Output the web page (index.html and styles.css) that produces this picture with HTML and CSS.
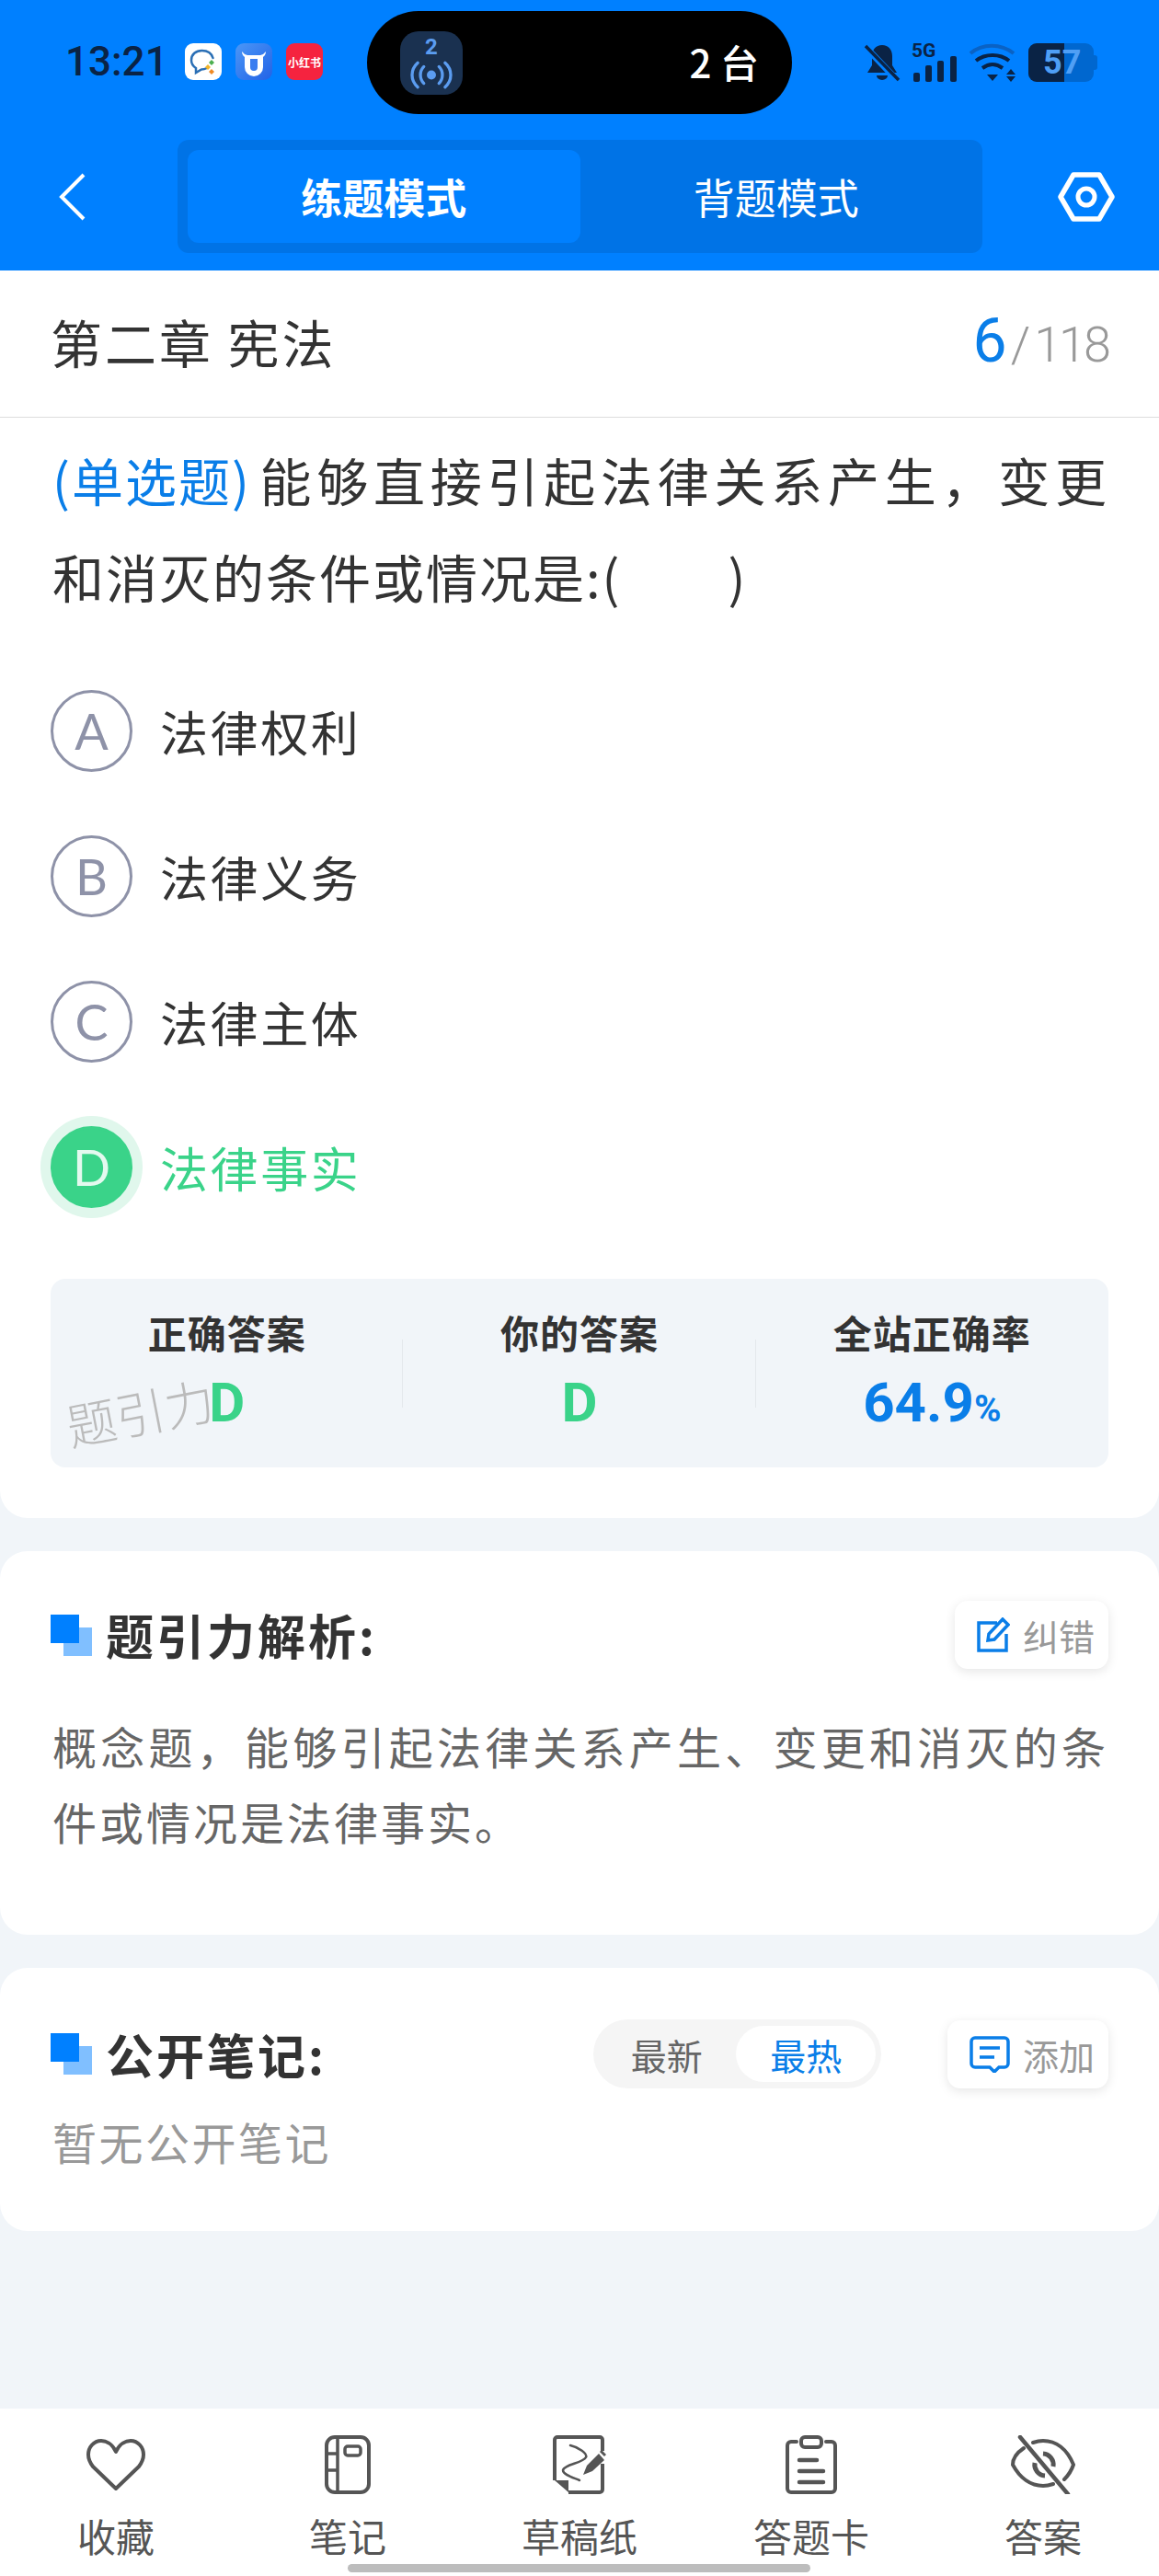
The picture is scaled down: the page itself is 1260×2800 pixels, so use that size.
FILE: index.html
```html
<!DOCTYPE html>
<html lang="zh-CN">
<head>
    <meta charset="UTF-8">
    <title>练题模式</title>
    <link rel="stylesheet" href="styles.css">
</head>
<body>
    <header class="top">
        <div class="status">
            <div class="status-left">
                <span class="time">13:21</span>
                <span class="app-icon app-white">
                    <svg viewBox="0 0 40 40" width="40" height="40"><path d="M24 27c-2 1-4 1.500-6 1.500l-6 3.500v-5c-3-2-5-5-5-8.500C7 12 12 8 18.500 8 25 8 29 11 30.500 16" fill="none" stroke="#2a6fb5" stroke-width="2.500" stroke-linecap="round"/><path d="M29 18l3 3-3 3-3-3z" fill="#4caf50"/><path d="M25 23l3 3-3 3-3-3z" fill="#f0b429"/><path d="M29 28l3 3-3 3-3-3z" fill="#f08a24"/></svg>
                </span>
                <span class="app-icon app-blue">
                    <svg viewBox="0 0 40 40" width="40" height="40"><path d="M7 9c0 4 3 7 6 7h14c3 0 6-3 6-7l-3 3-3 1H13l-3-1z" fill="#fff"/><path d="M10 14h20v12a10 10 0 0 1-20 0z" fill="#fff"/><path d="M16 17h8v9a4 4 0 0 1-8 0z" fill="#3a7df0"/></svg>
                </span>
                <span class="app-icon app-red">小红书</span>
            </div>
            <div class="island">
                <span class="island-icon">
                    <b>2</b>
                    <svg viewBox="0 0 68 40" width="56" height="33"><circle cx="34" cy="20" r="6" fill="#5b9cf0"/><path d="M24 9c-6 6-6 16 0 22M44 9c6 6 6 16 0 22M16 4c-10 9-10 23 0 32M52 4c10 9 10 23 0 32" fill="none" stroke="#5b9cf0" stroke-width="4" stroke-linecap="round"/></svg>
                </span>
                <span class="island-text">2 台</span>
            </div>
            <div class="status-right">
                <svg class="st-bell" viewBox="0 0 40 42" width="40" height="42"><path d="M20 2c-7 0-11 5-11 12v10l-5 8h32l-5-8v-10c0-7-4-12-11-12z" fill="#0a2345"/><path d="M14 35h12a6 5 0 0 1-12 0z" fill="#0a2345"/><path d="M1 3l36 38" stroke="#0080ff" stroke-width="7"/><path d="M2 3l36 37" stroke="#0a2345" stroke-width="3.500"/></svg>
                <span class="st-signal">
                    <em>5G</em>
                    <svg viewBox="0 0 50 28" width="50" height="28"><rect x="2" y="18" width="7" height="10" rx="2"/><rect x="15" y="10" width="7" height="18" rx="2"/><rect x="28" y="5" width="7" height="23" rx="2"/><rect x="42" y="0" width="7" height="28" rx="2"/></svg>
                </span>
                <svg class="st-wifi" viewBox="0 0 52 42" width="52" height="42"><path d="M2 11c13-11 33-11 47 0" fill="none" stroke="#0a62c4" stroke-width="4"/><path d="M8 19c10-8 26-8 36 0" fill="none" stroke="#0a2345" stroke-width="4"/><path d="M15 27c7-5 15-5 22 0" fill="none" stroke="#0a2345" stroke-width="4"/><path d="M20 34h12l-6 7z" fill="#0a2345"/><path d="M46 28l5 6h-10zM41 36h10l-5 6z" fill="#0a2345"/></svg>
                <span class="battery"><span class="battery-fill"></span><span class="battery-num">57</span></span>
                <i class="battery-nub"></i>
            </div>
        </div>
        <div class="nav-row">
            <svg class="back" viewBox="0 0 32 54" width="32" height="54"><path d="M29 3L5 27l24 24" fill="none" stroke="#fff" stroke-width="4"/></svg>
            <div class="segment">
                <span class="seg-item seg-active">练题模式</span>
                <span class="seg-item">背题模式</span>
            </div>
            <svg class="gear" viewBox="0 0 62 56" width="62" height="56"><path d="M17 4h28l14 24-14 24H17L3 28z" fill="none" stroke="#fff" stroke-width="5.500" stroke-linejoin="round"/><circle cx="31" cy="28" r="9" fill="none" stroke="#fff" stroke-width="5"/></svg>
        </div>
    </header>

    <main class="page">
        <section class="card card-question">
            <div class="chapter">
                <span class="chapter-name">第二章 宪法</span>
                <span class="count"><span class="count-now">6</span><span class="count-sep">/</span>118</span>
            </div>
            <p class="question"><span class="q-type">(单选题)</span>能够直接引起法律关系产生，变更和消灭的条件或情况是:(&emsp;&emsp;)</p>
            <ul class="options">
                <li class="option"><span class="opt-mark">A</span>法律权利</li>
                <li class="option"><span class="opt-mark">B</span>法律义务</li>
                <li class="option"><span class="opt-mark">C</span>法律主体</li>
                <li class="option option-right"><span class="opt-mark">D</span>法律事实</li>
            </ul>
            <div class="stats">
                <div class="stat"><span class="stat-label">正确答案</span><span class="stat-value green">D</span></div>
                <div class="stat"><span class="stat-label">你的答案</span><span class="stat-value green">D</span></div>
                <div class="stat"><span class="stat-label">全站正确率</span><span class="stat-value blue">64.9<small>%</small></span></div>
                <span class="watermark">题引力</span>
            </div>
        </section>

        <section class="card card-analysis">
            <div class="card-head">
                <h3 class="title"><i class="title-mark"></i>题引力解析:</h3>
                <span class="small-btn">
                    <svg viewBox="0 0 36 38" width="36" height="38"><path d="M22 6H2v30h30V18" fill="none" stroke="#0a7ee8" stroke-width="3.500"/><path d="M12 25l1-7L28 2l6 6-15 16z" fill="none" stroke="#0a7ee8" stroke-width="3.500"/></svg>
                    纠错
                </span>
            </div>
            <p class="analysis-text">概念题，能够引起法律关系产生、变更和消灭的条件或情况是法律事实。</p>
        </section>

        <section class="card card-notes">
            <div class="card-head">
                <h3 class="title"><i class="title-mark"></i>公开笔记:</h3>
                <div class="toggle">
                    <span class="toggle-item">最新</span>
                    <span class="toggle-item toggle-active">最热</span>
                </div>
                <span class="small-btn">
                    <svg viewBox="0 0 44 40" width="44" height="40"><path d="M6 2h32a4 4 0 0 1 4 4v24a4 4 0 0 1-4 4h-6l-5 5-5-5H6a4 4 0 0 1-4-4V6a4 4 0 0 1 4-4z" fill="none" stroke="#0a7ee8" stroke-width="3.500"/><path d="M11 13h22M11 23h16" stroke="#0a7ee8" stroke-width="3.500"/></svg>
                    添加
                </span>
            </div>
            <p class="no-notes">暂无公开笔记</p>
        </section>
    </main>

    <footer class="tabbar">
        <div class="tab">
            <svg viewBox="0 0 64 56" width="64" height="56"><path d="M32 14C28 5 21 2 16 2 8 2 2 9 2 17c0 5 2 9 5 13l25 24 25-24c3-4 5-8 5-13 0-8-6-15-14-15-5 0-12 3-16 12z" fill="none" stroke="#555" stroke-width="4" stroke-linejoin="round"/></svg>
            <span>收藏</span>
        </div>
        <div class="tab">
            <svg viewBox="0 0 50 64" width="50" height="64"><rect x="2" y="2" width="46" height="60" rx="9" fill="none" stroke="#555" stroke-width="4"/><path d="M14 2v60M2 20h12M2 38h12" stroke="#555" stroke-width="3.500"/><rect x="22" y="12" width="17" height="10" rx="3" fill="none" stroke="#555" stroke-width="3.500"/></svg>
            <span>笔记</span>
        </div>
        <div class="tab">
            <svg viewBox="0 0 58 64" width="58" height="64"><path d="M54 31v28a3 3 0 0 1-3 3H17M2 49V5a3 3 0 0 1 3-3h46a3 3 0 0 1 3 3v12" fill="none" stroke="#555" stroke-width="4"/><path d="M2 49h15v13z" fill="#555"/><path d="M19 11C28 13 38 20 36 24 33 30 12 32 11 38 11 43 22 46 29 49" fill="none" stroke="#555" stroke-width="2.500" stroke-linecap="round"/><path d="M33 43l4-10 13-13 6 7-13 12z" fill="#555"/><path d="M52 17l5 5" stroke="#555" stroke-width="3"/></svg>
            <span>草稿纸</span>
        </div>
        <div class="tab">
            <svg viewBox="0 0 56 64" width="56" height="64"><path d="M12 7H6a4 4 0 0 0-4 4v47a4 4 0 0 0 4 4h44a4 4 0 0 0 4-4V11a4 4 0 0 0-4-4h-6" fill="none" stroke="#555" stroke-width="4" stroke-linecap="round"/><rect x="17" y="2" width="22" height="11" rx="4" fill="none" stroke="#555" stroke-width="4"/><path d="M15 27h19M15 39h26M15 51h26" stroke="#555" stroke-width="4.500" stroke-linecap="round"/></svg>
            <span>答题卡</span>
        </div>
        <div class="tab">
            <svg viewBox="0 0 70 64" width="70" height="64"><path d="M14 14C5 20 2 26 2 32c8 15 20 23 33 23 4 0 8-1 11-2M24 8c3-1 7-2 11-2 14 0 26 9 33 26-2 6-6 12-10 16" fill="none" stroke="#555" stroke-width="4" stroke-linecap="round"/><path d="M35 20a12 12 0 0 1 11 14M26 30a12 12 0 0 0 11 14" fill="none" stroke="#555" stroke-width="5"/><path d="M10 2l52 62" stroke="#555" stroke-width="4.500" stroke-linecap="round"/></svg>
            <span>答案</span>
        </div>
        <i class="home-bar"></i>
    </footer>
</body>
</html>
```

FILE: styles.css
```css
* {
    box-sizing: border-box;
}

body {
    margin: 0;
    width: 1260px;
    height: 2800px;
    position: relative;
    overflow: hidden;
    display: flex;
    flex-direction: column;
    background-color: #f1f5f9;
    font-family: "Noto Sans CJK SC", Roboto, sans-serif;
    color: #333;
}

/* top bar */
.top {
    height: 294px;
    background-color: #0080ff;
    padding-top: 12px;
}

.status {
    height: 112px;
    display: flex;
    align-items: center;
    position: relative;
}

.status-left {
    display: flex;
    align-items: center;
    margin-left: 71px;
    margin-top: -2px;
}

.time {
    width: 130px;
    font-family: Roboto, sans-serif;
    font-size: 44px;
    font-weight: 500;
    color: #0a2345;
}

.app-icon {
    width: 40px;
    height: 40px;
    border-radius: 9px;
    margin-right: 15px;
    display: flex;
    align-items: center;
    justify-content: center;
}

.app-white {
    background-color: #fff;
}

.app-blue {
    background: linear-gradient(135deg, #4a97f7, #2262e6);
}

.app-red {
    background-color: #f5233f;
    color: #fff;
    font-size: 12px;
    font-weight: 700;
    white-space: nowrap;
}

.island {
    width: 462px;
    height: 112px;
    position: absolute;
    left: 399px;
    top: 0;
    padding: 0 36px;
    background-color: #000;
    border-radius: 56px;
    display: flex;
    align-items: center;
    justify-content: space-between;
}

.island-icon {
    width: 68px;
    height: 69px;
    border-radius: 20px;
    background-color: #1a3150;
    display: flex;
    flex-direction: column;
    align-items: center;
}

.island-icon b {
    font-family: Roboto, sans-serif;
    font-size: 24px;
    line-height: 27px;
    margin-top: 4px;
    color: #5b9cf0;
}

.island-text {
    margin-top: -3px;
    font-size: 42px;
    font-weight: 500;
    color: #fff;
}

.status-right {
    position: absolute;
    left: 939px;
    top: 35px;
    display: flex;
    align-items: flex-end;
}

.st-signal {
    width: 50px;
    height: 42px;
    margin: 0 12px;
    position: relative;
    fill: #0a2345;
    display: flex;
    align-items: flex-end;
}

.st-signal svg {
    height: 28px;
}

.st-signal em {
    position: absolute;
    left: 0;
    top: -1px;
    font-family: Roboto, sans-serif;
    font-style: normal;
    font-weight: 700;
    font-size: 21px;
    line-height: 18px;
    color: #0a2345;
}

.battery {
    width: 71px;
    height: 42px;
    margin-left: 13px;
    position: relative;
    background-color: #0067cf;
    border-radius: 9px;
    overflow: hidden;
}

.battery-fill {
    position: absolute;
    left: 0;
    top: 0;
    width: 39px;
    height: 42px;
    background-color: #0a2345;
}

.battery-num {
    position: absolute;
    left: 16px;
    top: -3px;
    font-family: Roboto, sans-serif;
    font-size: 36px;
    font-weight: 700;
    line-height: 48px;
    color: #4f9ff5;
}

.battery-nub {
    width: 4px;
    height: 16px;
    margin-bottom: 13px;
    background-color: #0067cf;
    border-radius: 0 3px 3px 0;
}

.nav-row {
    height: 170px;
    padding: 9px 0 0 62px;
    display: flex;
    align-items: center;
}

.back {
    margin-right: 99px;
}

.segment {
    width: 875px;
    height: 123px;
    margin-right: 82px;
    padding: 11px;
    display: flex;
    border-radius: 12px;
    background-color: #0073e6;
}

.seg-item {
    flex: 1;
    display: flex;
    align-items: center;
    justify-content: center;
    border-radius: 12px;
    font-size: 45px;
    color: #fff;
}

.seg-active {
    background-color: #0080ff;
    font-weight: 700;
}

/* cards */
.page {
    display: flex;
    flex-direction: column;
    gap: 36px;
}

.card {
    background-color: #fff;
    padding: 0 55px;
}

.card-question {
    height: 1356px;
    border-radius: 0 0 30px 30px;
}

.card-analysis {
    height: 417px;
    border-radius: 30px;
    padding-top: 54px;
}

.card-notes {
    height: 286px;
    border-radius: 30px;
    padding-top: 56px;
}

.chapter {
    height: 160px;
    margin: 0 -55px;
    padding: 0 55px;
    display: flex;
    align-items: center;
    justify-content: space-between;
    border-bottom: 1px solid #ddd;
}

.chapter-name {
    margin-top: -6px;
    font-size: 56px;
    letter-spacing: 3px;
}

.count {
    margin-top: -6px;
    font-family: Roboto, sans-serif;
    font-weight: 300;
    font-size: 54px;
    letter-spacing: -3px;
    color: #999;
}

.count-now {
    font-size: 66px;
    font-weight: 400;
    color: #0a7ee8;
}

.count-sep {
    margin: 0 7px;
}

.question {
    margin: 14px 0 0 2px;
    font-size: 56px;
    line-height: 105px;
    letter-spacing: 2px;
    text-align: justify;
}

.q-type {
    display: inline-block;
    margin-right: 6px;
    color: #0a7ee8;
}

.options {
    list-style: none;
    margin: 72px 0 0;
    padding: 0;
}

.option {
    height: 89px;
    margin-bottom: 69px;
    display: flex;
    align-items: center;
    font-size: 52px;
    letter-spacing: 2.600px;
}

.option:last-child {
    margin-bottom: 0;
}

.opt-mark {
    width: 89px;
    height: 89px;
    margin-right: 30px;
    border: 3px solid #8e92a8;
    border-radius: 50%;
    display: flex;
    align-items: center;
    justify-content: center;
    font-family: Lato, sans-serif;
    font-size: 54px;
    letter-spacing: 0;
    color: #8e92a8;
}

.option-right {
    color: #3ad389;
}

.option-right .opt-mark {
    background-color: #3ad389;
    border-color: #3ad389;
    box-shadow: 0 0 0 11px #e0f7ec;
    color: #e4f9ef;
}

.stats {
    height: 205px;
    margin-top: 77px;
    position: relative;
    display: flex;
    background-color: #f1f5f9;
    border-radius: 16px;
}

.stat {
    flex: 1;
    padding-top: 30px;
    display: flex;
    flex-direction: column;
    align-items: center;
    background: linear-gradient(#e4e8ec, #e4e8ec) right 66px / 1px 74px no-repeat;
}

.stat:last-of-type {
    background: none;
}

.stat-label {
    font-size: 42px;
    line-height: 56px;
    font-weight: 700;
    letter-spacing: 1px;
    color: #333;
}

.stat-value {
    margin-top: 17px;
    font-family: Roboto, sans-serif;
    font-size: 60px;
    line-height: 64px;
    font-weight: 700;
}

.stat-value small {
    font-size: 40px;
}

.green {
    color: #3ad389;
}

.blue {
    color: #0a7ee8;
}

.watermark {
    position: absolute;
    left: 16px;
    top: 104px;
    font-size: 54px;
    font-weight: 300;
    color: #bbb;
    transform: rotate(-11deg);
}

.card-head {
    display: flex;
    align-items: center;
}

.title {
    margin: 0 auto 0 0;
    display: flex;
    align-items: center;
    font-size: 52px;
    font-weight: 700;
    letter-spacing: 3px;
    line-height: 74px;
}

.title-mark {
    width: 45px;
    height: 45px;
    margin-right: 15px;
    background: linear-gradient(#0080ff, #0080ff) 0 0 / 31px 31px no-repeat, linear-gradient(#80bfff, #80bfff) 14px 14px / 31px 31px no-repeat;
}

.small-btn {
    height: 74px;
    padding: 0 15px 0 24px;
    display: flex;
    align-items: center;
    gap: 14px;
    border-radius: 14px;
    background-color: #fff;
    box-shadow: 0 3px 12px rgba(0, 0, 0, 0.1);
    font-size: 39px;
    color: #999;
}

.analysis-text {
    margin: 42px 0 0 2px;
    font-size: 48px;
    line-height: 82px;
    letter-spacing: 3px;
    text-align: justify;
    color: #666;
}

.toggle {
    width: 313px;
    height: 75px;
    margin-right: 72px;
    padding: 7px 6px 7px 4px;
    display: flex;
    border-radius: 38px;
    background-color: #f5f5f5;
    font-size: 39px;
}

.toggle-item {
    flex: 1;
    display: flex;
    align-items: center;
    justify-content: center;
    color: #666;
    border-radius: 31px;
}

.toggle-active {
    background-color: #fff;
    color: #0a7ee8;
}

.no-notes {
    margin: 22px 0 0 2px;
    font-size: 48px;
    letter-spacing: 2.500px;
    color: #999;
}

/* bottom tabs */
.tabbar {
    position: absolute;
    left: 0;
    right: 0;
    bottom: 0;
    height: 182px;
    background-color: #fff;
    display: grid;
    grid-template-columns: repeat(5, 1fr);
}

.tab {
    padding-top: 29px;
    display: flex;
    flex-direction: column;
    align-items: center;
    font-size: 42px;
    color: #555;
}

.tab svg {
    height: 64px;
}

.tab span {
    margin-top: 15px;
    line-height: 60px;
}

.home-bar {
    position: absolute;
    left: 378px;
    bottom: 4px;
    width: 503px;
    height: 9px;
    border-radius: 5px;
    background-color: #bdbdbd;
}
```
